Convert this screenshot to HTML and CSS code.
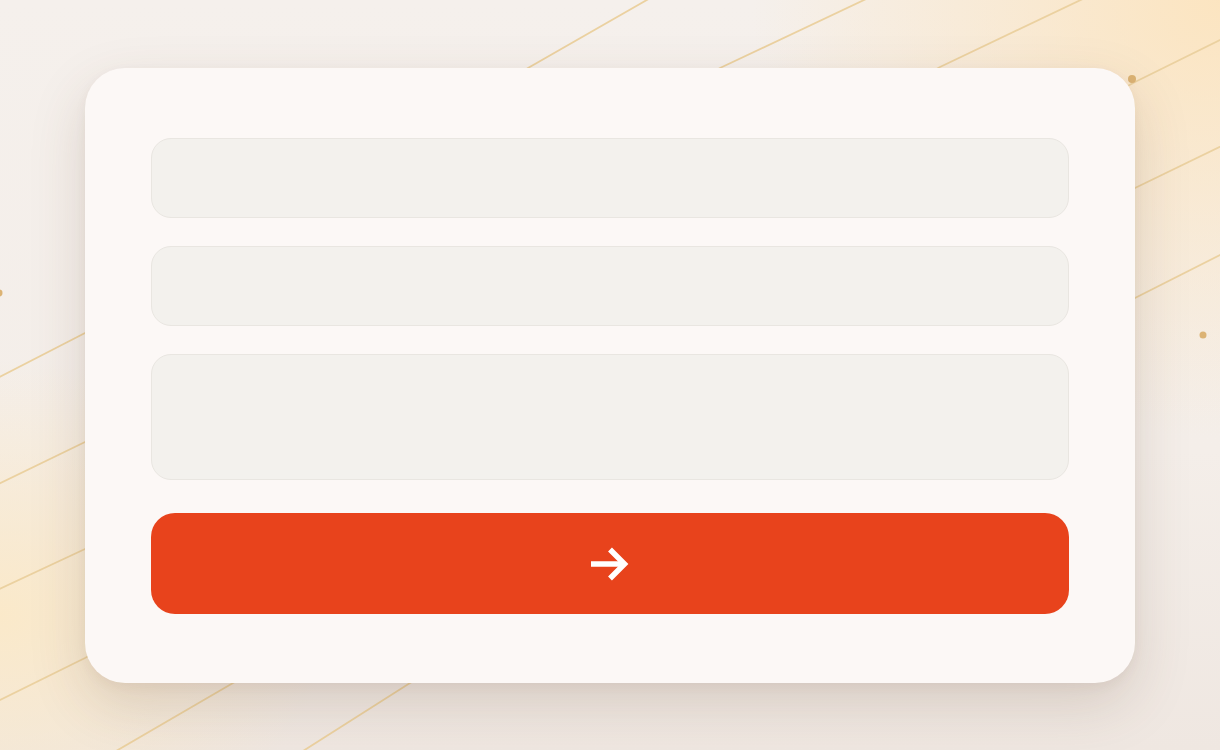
FILE: index.html
```html
<!DOCTYPE html>
<html lang="en">
<head>
<meta charset="utf-8">
<title>Form</title>
<link rel="stylesheet" href="styles.css">
</head>
<body>
<svg class="backdrop" viewBox="0 0 1220 750" width="1220" height="750" aria-hidden="true">
  <g class="rules">
    <path d="M-20 387 L85 333 L528 68 L680 -19"/>
    <path d="M-20 493 L85 442 L720 68 L900 -17"/>
    <path d="M-20 598 L85 549 L940 67 L1110 -14"/>
    <path d="M-20 710 L85 658 L1135 82 L1240 30"/>
    <path d="M80 772 L233 683 L1135 188 L1240 137"/>
    <path d="M270 772 L410 683 L1135 298 L1240 245"/>
  </g>
  <g class="dots">
    <circle cx="1132" cy="79" r="4"/>
    <circle cx="1203" cy="335" r="3.5"/>
    <circle cx="-1" cy="293" r="3.5"/>
  </g>
</svg>
<main class="page">
  <form class="card">
    <div class="field"></div>
    <div class="field"></div>
    <div class="field field-tall"></div>
    <button class="submit" type="button" aria-label="Submit">
      <svg class="arrow" viewBox="0 0 40 36" width="40" height="36">
        <path d="M1 18 H34"/>
        <path d="M20 3.5 L34.5 18 L20 32.5"/>
      </svg>
    </button>
  </form>
</main>
</body>
</html>
```

FILE: styles.css
```css
* { box-sizing: border-box; }

html, body {
  margin: 0;
  height: 100%;
}

body {
  font-family: "Inter", "Liberation Sans", sans-serif;
  background:
    radial-gradient(ellipse 600px 560px at 100% 0%, rgba(252, 228, 190, 0.95), rgba(252, 228, 190, 0) 78%),
    radial-gradient(ellipse 440px 340px at 0% 82%, rgba(251, 233, 200, 0.95), rgba(251, 233, 200, 0) 75%),
    linear-gradient(180deg, #f5f0ec 0%, #f4eee9 60%, #efe7e1 100%);
  overflow: hidden;
  position: relative;
}

.backdrop {
  position: absolute;
  left: 0;
  top: 0;
  z-index: 0;
}

.rules path {
  fill: none;
  stroke: #ebd1a0;
  stroke-width: 1.8;
}

.dots circle {
  fill: #dcb374;
}

.page {
  position: relative;
  z-index: 1;
  padding: 68px 85px 0;
}

.card {
  width: 1050px;
  height: 615px;
  background: #fcf8f6;
  border-radius: 40px;
  padding: 70px 66px 69px;
  display: flex;
  flex-direction: column;
  gap: 28px;
  box-shadow: 0 22px 55px rgba(95, 65, 40, 0.17), 0 4px 12px rgba(95, 65, 40, 0.05);
}

.field {
  height: 80px;
  background: #f3f1ed;
  border: 1px solid #e9e6e1;
  border-radius: 20px;
  flex: none;
}

.field-tall {
  height: 126px;
}

.submit {
  margin-top: 5px;
  height: 101px;
  border: none;
  border-radius: 24px;
  background: #e8431c;
  display: flex;
  align-items: center;
  justify-content: center;
  cursor: pointer;
  padding: 0;
  flex: none;
}

.arrow path {
  fill: none;
  stroke: #ffffff;
  stroke-width: 5.5;
  stroke-linecap: butt;
  stroke-linejoin: miter;
}
```
